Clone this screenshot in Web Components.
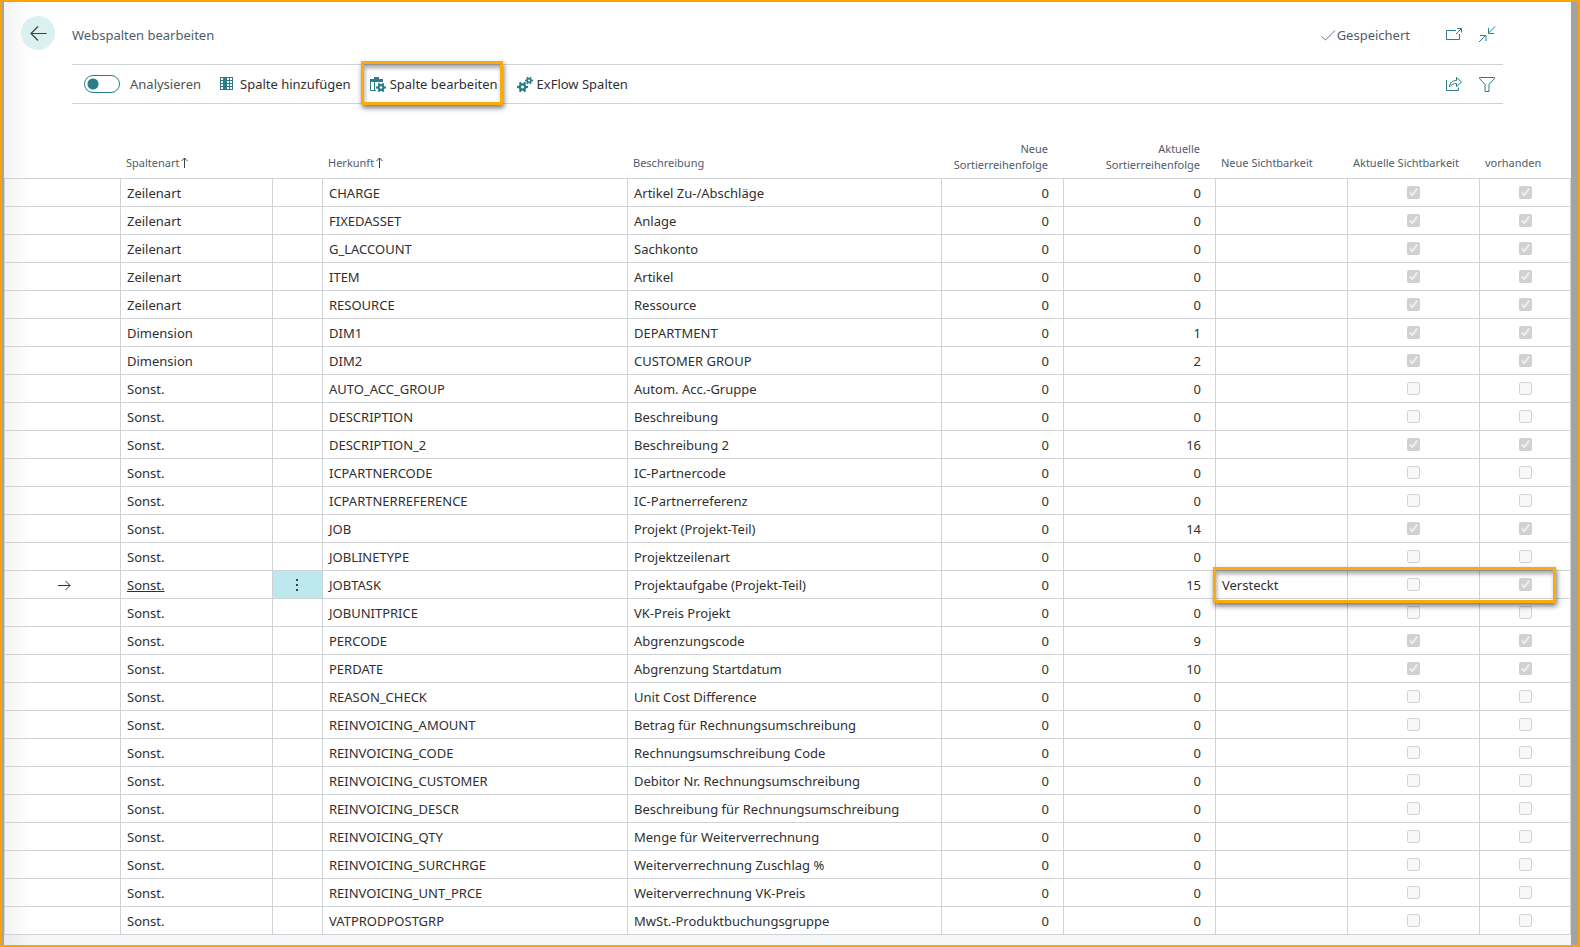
<!DOCTYPE html>
<html lang="de">
<head>
<meta charset="utf-8">
<title>Webspalten bearbeiten</title>
<style>
body { margin: 0; font-family: "Noto Sans", "Open Sans", sans-serif; font-size: 13px; line-height: 20px; color: #303030; }
</style>
</head>
<body>
<page-frame>
  <page-header slot="header" heading="Webspalten bearbeiten" status="Gespeichert"></page-header>
  <action-bar slot="actions">
    <toggle-switch>Analysieren</toggle-switch>
    <action-button icon="columns">Spalte hinzufügen</action-button>
    <action-button icon="edit-column" marked>Spalte bearbeiten</action-button>
    <action-button icon="gears">ExFlow Spalten</action-button>
    <action-button slot="end" icon="share" label="Teilen"></action-button>
    <action-button slot="end" icon="filter" label="Filter"></action-button>
  </action-bar>
  <column-table></column-table>
</page-frame>

<script>
const gear = (cx, cy, r) => {
  let teeth = '';
  for (let a = 0; a < 360; a += 60) {
    teeth += `<rect x="${cx - r * 0.2}" y="${cy - r}" width="${r * 0.4}" height="${r}" transform="rotate(${a + 30} ${cx} ${cy})"/>`;
  }
  return `<g fill="currentColor">${teeth}</g><circle cx="${cx}" cy="${cy}" r="${r * 0.48}" fill="#fff" stroke="currentColor" stroke-width="${r * 0.42}"/>`;
};
const ICONS = {
  back: '<path d="M16.5 8.5H1M8 1.5L1 8.5L8 15.5" fill="none" stroke="currentColor" stroke-width="1.2"/>',
  check: '<path d="M1.5 9.5L5.500 13L15 3.500" fill="none" stroke="currentColor"/>',
  popout: '<path d="M10 4.500H.5V13.500H13.500V8M10 8L15 3M11.500 2.500H15.500V6.500" fill="none" stroke="currentColor"/>',
  collapse: '<path d="M16 .5L9.500 7M9.500 2V7.500H15M0 16L6.500 9.500M1 9.500H7V15" fill="none" stroke="currentColor"/>',
  share: '<path d="M.5 4V14.500H12.500V11.500M3.500 10.500C4 6.500 6.500 4.500 10.500 4.500V1.500L15.500 6L10.500 10.500V7.500C7.500 7.500 5.500 8.500 3.500 11Z" fill="none" stroke="currentColor"/>',
  filter: '<path d="M.5 1.500H15.500V2.500L10 8.500V15.500H6V8.500L.5 2.500Z" fill="none" stroke="currentColor"/>',
  columns: '<path d="M0 1H13V14H0Z" fill="currentColor"/><path d="M1 2h2v2H1zM1 5h2v2H1zM1 8h2v2H1zM1 11h2v2H1zM7 2h2v2H7zM10 2h2v2h-2zM7 5h2v2H7zM10 5h2v2h-2zM7 8h2v2H7zM10 8h2v2h-2zM7 11h2v2H7zM10 11h2v2h-2z" fill="#fff"/>',
  'edit-column': '<path d="M0 3H4V1H9V3H13V6H0Z" fill="currentColor"/><path d="M.5 5V14.500H6M4.500 5V14" fill="none" stroke="currentColor"/><circle cx="11" cy="11.500" r="5" fill="#fff"/>' + gear(11, 11.5, 5),
  gears: gear(5.5, 11, 5.5) + gear(12, 4.5, 4),
  dots: '<path d="M7 3h2v2H7zM7 8h2v2H7zM7 13h2v2H7z" fill="currentColor"/>',
  row: '<path d="M4 7.500H16M11.500 3L16 7.500L11.500 12" fill="none" stroke="currentColor"/>'
};
const icon = (name, size = 17) => `<svg width="${size}" height="${size}" viewBox="0 0 ${size} ${size}" aria-hidden="true">${ICONS[name]}</svg>`;

class BaseElement extends HTMLElement {
  connectedCallback() {
    if (!this.shadowRoot) this.attachShadow({ mode: 'open' }).innerHTML = this.render();
  }
}

customElements.define('page-frame', class extends BaseElement {
  render() {
    return `<style>
      :host { display: block; box-sizing: border-box; min-height: 100vh; border: 2px solid #f9a400; background: #a3a3a3; padding: 0 7px 0 2px; }
      .sheet { min-height: calc(100vh - 4px); background: linear-gradient(90deg, #0000000c, #0000 28px), #f5f6f8; }
      .page { background: linear-gradient(90deg, #0000000c, #0000 28px), #fff; }
      .top { padding: 0 68px; }
    </style>
    <div class="sheet"><div class="page">
      <div class="top"><slot name="header"></slot><slot name="actions"></slot></div>
      <slot></slot>
    </div></div>`;
  }
});

customElements.define('page-header', class extends BaseElement {
  render() {
    return `<style>
      :host { display: flex; align-items: center; height: 62px; box-sizing: border-box; padding: 0 7px 0 0; color: #505c6d; margin-left: -51px; }
      h1 { flex: 1; font: inherit; margin: 4px 0 0 17px; }
      button { border: 0; padding: 0; background: none; color: #2a7d88; display: grid; place-items: center; width: 17px; height: 17px; margin: 3px 0 0 16px; }
      .back { width: 34px; height: 34px; margin: 0; border-radius: 50%; background: #daf0f1; color: #404040; }
      output { display: flex; align-items: center; margin: 4px 20px 0 0; }
      output svg { color: #6b7480; }
    </style>
    <button class="back" aria-label="Zurück">${icon('back')}</button>
    <h1>${this.getAttribute('heading')}</h1>
    <output>${icon('check')}${this.getAttribute('status')}</output>
    <button aria-label="In neuem Fenster öffnen">${icon('popout')}</button>
    <button aria-label="Verkleinern">${icon('collapse')}</button>`;
  }
});

customElements.define('action-bar', class extends BaseElement {
  render() {
    return `<style>
      :host { display: flex; justify-content: space-between; align-items: center; height: 38px; border: solid #d0d2d6; border-width: 1px 0; padding: 0 7px 0 12px; }
      div { display: flex; align-items: center; gap: 19px; }
      .end { gap: 16px; }
    </style>
    <div><slot></slot></div><div class="end"><slot name="end"></slot></div>`;
  }
});

customElements.define('toggle-switch', class extends BaseElement {
  render() {
    return `<style>
      label { display: flex; align-items: center; gap: 10px; color: #505050; }
      input { appearance: none; box-sizing: border-box; width: 36px; height: 18px; margin: 0; border: 1px solid #2a7d88; border-radius: 9px;
        background: radial-gradient(circle at 8px 8px, #2a7d88 5px, #0000 6px); }
    </style>
    <label><input type="checkbox" role="switch"><span><slot></slot></span></label>`;
  }
});

customElements.define('action-button', class extends BaseElement {
  render() {
    const label = this.getAttribute('label');
    return `<style>
      :host { display: block; position: relative; }
      button { display: flex; align-items: center; gap: 3px; border: 0; padding: 0; background: none; font: inherit; color: inherit; }
      svg { color: #2a7d88; }
      :host([marked])::after { content: ""; position: absolute; inset: -13px -5px -11px -9px; border: 3px solid #fbab0a; box-shadow: 1px 3px 5px #0008, inset 1px 4px 4px #0005; }
    </style>
    <button${label ? ` aria-label="${label}"` : ''}>${icon(this.getAttribute('icon'))}<slot></slot></button>`;
  }
});

const ROWS = [
  ['Zeilenart', 'CHARGE', 'Artikel Zu-/Abschläge', 0, 1, 1],
  ['Zeilenart', 'FIXEDASSET', 'Anlage', 0, 1, 1],
  ['Zeilenart', 'G_LACCOUNT', 'Sachkonto', 0, 1, 1],
  ['Zeilenart', 'ITEM', 'Artikel', 0, 1, 1],
  ['Zeilenart', 'RESOURCE', 'Ressource', 0, 1, 1],
  ['Dimension', 'DIM1', 'DEPARTMENT', 1, 1, 1],
  ['Dimension', 'DIM2', 'CUSTOMER GROUP', 2, 1, 1],
  ['Sonst.', 'AUTO_ACC_GROUP', 'Autom. Acc.-Gruppe', 0, 0, 0],
  ['Sonst.', 'DESCRIPTION', 'Beschreibung', 0, 0, 0],
  ['Sonst.', 'DESCRIPTION_2', 'Beschreibung 2', 16, 1, 1],
  ['Sonst.', 'ICPARTNERCODE', 'IC-Partnercode', 0, 0, 0],
  ['Sonst.', 'ICPARTNERREFERENCE', 'IC-Partnerreferenz', 0, 0, 0],
  ['Sonst.', 'JOB', 'Projekt (Projekt-Teil)', 14, 1, 1],
  ['Sonst.', 'JOBLINETYPE', 'Projektzeilenart', 0, 0, 0],
  ['Sonst.', 'JOBTASK', 'Projektaufgabe (Projekt-Teil)', 15, 0, 1, 'Versteckt'],
  ['Sonst.', 'JOBUNITPRICE', 'VK-Preis Projekt', 0, 0, 0],
  ['Sonst.', 'PERCODE', 'Abgrenzungscode', 9, 1, 1],
  ['Sonst.', 'PERDATE', 'Abgrenzung Startdatum', 10, 1, 1],
  ['Sonst.', 'REASON_CHECK', 'Unit Cost Difference', 0, 0, 0],
  ['Sonst.', 'REINVOICING_AMOUNT', 'Betrag für Rechnungsumschreibung', 0, 0, 0],
  ['Sonst.', 'REINVOICING_CODE', 'Rechnungsumschreibung Code', 0, 0, 0],
  ['Sonst.', 'REINVOICING_CUSTOMER', 'Debitor Nr. Rechnungsumschreibung', 0, 0, 0],
  ['Sonst.', 'REINVOICING_DESCR', 'Beschreibung für Rechnungsumschreibung', 0, 0, 0],
  ['Sonst.', 'REINVOICING_QTY', 'Menge für Weiterverrechnung', 0, 0, 0],
  ['Sonst.', 'REINVOICING_SURCHRGE', 'Weiterverrechnung Zuschlag %', 0, 0, 0],
  ['Sonst.', 'REINVOICING_UNT_PRCE', 'Weiterverrechnung VK-Preis', 0, 0, 0],
  ['Sonst.', 'VATPRODPOSTGRP', 'MwSt.-Produktbuchungsgruppe', 0, 0, 0]
];

customElements.define('column-table', class extends BaseElement {
  render() {
    const box = (on, label) => `<input type="checkbox" disabled aria-label="${label}"${on ? ' checked' : ''}>`;
    const body = ROWS.map(([kind, source, text, order, visible, exists, next = '']) => {
      const current = next !== '';
      return `<tr${current ? ' class="current"' : ''}>
        <td class="mid">${current ? icon('row') : ''}</td>
        <td>${current ? `<a href="#">${kind}</a>` : kind}</td>
        <td class="menu">${current ? `<button aria-label="Weitere Optionen">${icon('dots')}</button>` : ''}</td>
        <td>${source}</td><td>${text}</td><td class="num">0</td><td class="num">${order}</td><td>${next}</td>
        <td class="mid">${box(visible, 'Aktuelle Sichtbarkeit')}</td>
        <td class="mid">${box(exists, 'vorhanden')}${current ? '<span class="mark"></span>' : ''}</td></tr>`;
    }).join('');
    const up = '<svg width="7" height="11" viewBox="0 0 7 11" aria-hidden="true"><path d="M3.500 11V1M.5 4L3.500 1L6.500 4" fill="none" stroke="#404040"/></svg>';
    return `<style>
      :host { display: block; }
      table { width: 100%; table-layout: fixed; border-collapse: separate; border-spacing: 0; }
      thead { color: #505c6d; font-size: 11px; line-height: 16px; }
      th { height: 75px; box-sizing: border-box; padding: 0 4px 7px 5px; font-weight: 400; text-align: left; vertical-align: bottom; white-space: nowrap; border-bottom: 1px solid #d0d2d6; }
      th.num { text-align: right; padding: 0 16px 5px 0; }
      td { height: 28px; box-sizing: border-box; padding: 0 0 0 6px; border: solid #d0d2d6; border-width: 0 1px 1px 0; white-space: nowrap; }
      td:first-child { border-left-width: 1px; }
      td.num { text-align: right; padding: 0 14px 0 0; }
      td.mid, td.menu { text-align: center; padding: 0; }
      input { display: block; margin: 0 auto; }
      svg { vertical-align: middle; }
      th svg { vertical-align: -1px; margin-left: 2px; }
      a { color: inherit; }
      button { display: block; width: 100%; height: 27px; border: 0; padding: 0; background: #bde9ee; color: #2b4a50; }
      .current { position: relative; }
      .mark { position: absolute; inset: -4px 15px -4px auto; width: 337px; border: 3px solid #fbab0a; box-shadow: 1px 3px 5px #0008, inset 1px 4px 4px #0005; }
    </style>
    <table>
      <colgroup><col style="width:117px"><col style="width:152px"><col style="width:50px"><col style="width:305px"><col><col style="width:122px"><col style="width:152px"><col style="width:132px"><col style="width:132px"><col style="width:91px"></colgroup>
      <thead><tr><th></th><th>Spaltenart${up}</th><th></th><th>Herkunft${up}</th><th>Beschreibung</th>
        <th class="num">Neue<br>Sortierreihenfolge</th><th class="num">Aktuelle<br>Sortierreihenfolge</th>
        <th>Neue Sichtbarkeit</th><th>Aktuelle Sichtbarkeit</th><th>vorhanden</th></tr></thead>
      <tbody>${body}</tbody>
    </table>`;
  }
});
</script>
</body>
</html>
